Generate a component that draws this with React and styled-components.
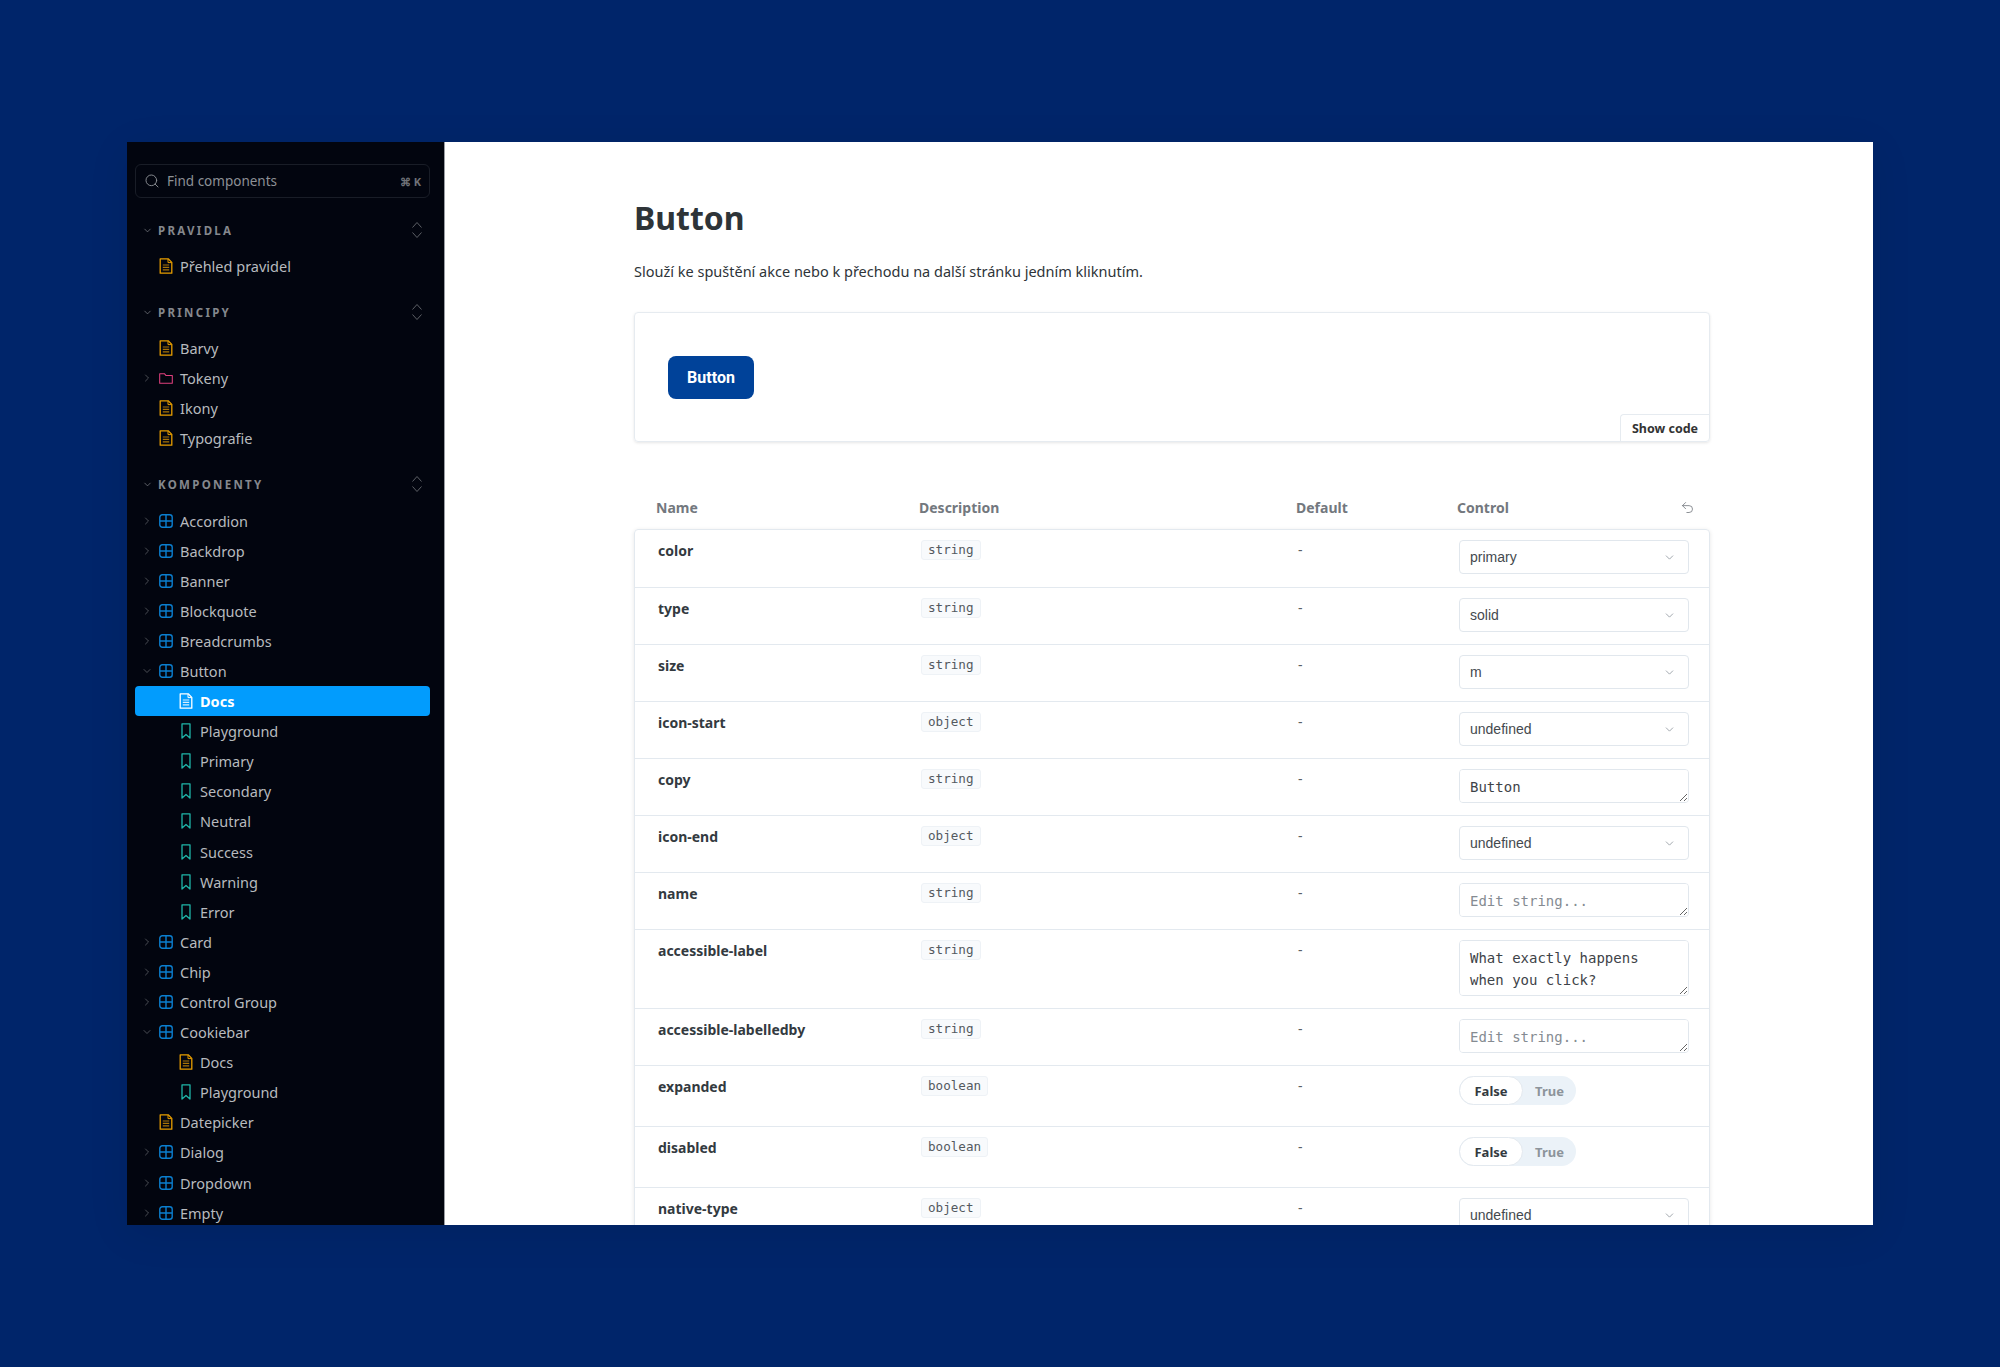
import styled, { createGlobalStyle } from 'styled-components';
import { ChevronDown, ChevronRight, Search, Undo2 } from 'lucide-react';

const GlobalStyle = createGlobalStyle`
    html, body {
        margin: 0;
        padding: 0;
        background: #00256a;
    }
    * {
        box-sizing: border-box;
    }
`;

const UI_FONT = '"Noto Sans", "Open Sans", sans-serif';
const MONO_FONT = '"DejaVu Sans Mono", "Liberation Mono", monospace';

const StPage = styled.div`
    height: 1367px;
    padding: 142px 127px;
    overflow: hidden;
    background: #00256a;
`;

const StWindow = styled.div`
    display: flex;
    width: 1746px;
    height: 1083px;
    overflow: hidden;
    background: #fff;
    font-family: ${UI_FONT};
    box-shadow: 0 8px 40px rgba(0, 0, 0, 0.08);
`;

const StSidebar = styled.aside`
    flex: 0 0 318px;
    padding: 22px 14px 0 8px;
    overflow: hidden;
    background: #02050f;
    border-right: 1px solid #9a9da3;
`;

const StSearch = styled.div`
    display: flex;
    align-items: center;
    height: 34px;
    margin-bottom: 17px;
    padding: 0 8px;
    gap: 7px;
    border: 1px solid #191d27;
    border-radius: 6px;
    color: #8d9096;
    font-size: 13.5px;
`;

const StSearchText = styled.span`
    flex: 1;
`;

const StShortcut = styled.span`
    color: #6f7278;
    font-size: 11px;
    font-weight: 700;
`;

const StSection = styled.section`
    margin-bottom: 16px;
`;

const StSectionHead = styled.div`
    display: flex;
    align-items: center;
    height: 30px;
    margin-bottom: 6px;
    padding: 0 7px 0 7px;
    color: #85888d;
    font-size: 11.5px;
    font-weight: 700;
    letter-spacing: 2.3px;
`;

const StSectionTitle = styled.span`
    flex: 1;
    margin-left: 5px;
`;

const StRow = styled.div`
    display: flex;
    align-items: center;
    height: 30.1px;
    padding-left: ${({ $nested }) => ($nested ? '44px' : '24px')};
    border-radius: 4px;
    background: ${({ $active }) => ($active ? '#029cfd' : 'transparent')};
    color: ${({ $active }) => ($active ? '#fff' : '#b7babe')};
    font-size: 14.5px;
    font-weight: ${({ $active }) => ($active ? 700 : 400)};
`;

const StCaret = styled.span`
    display: flex;
    justify-content: center;
    width: 12px;
    margin-left: -18px;
    margin-right: 6px;
    color: #5d6066;
`;

const StIconSlot = styled.span`
    display: flex;
    justify-content: center;
    width: 14px;
    margin-right: 7px;
`;

const StMain = styled.main`
    flex: 1;
    min-width: 0;
    padding: 56px 163px 0 189px;
    overflow: hidden;
    color: #2e3438;
`;

const StTitle = styled.h1`
    margin: 0 0 23px;
    font-size: 32px;
    font-weight: 700;
    line-height: 40px;
`;

const StLead = styled.p`
    margin: 0 0 31px;
    font-size: 14.5px;
    line-height: 20px;
`;

const StPreview = styled.div`
    position: relative;
    display: flex;
    align-items: center;
    height: 130px;
    padding-left: 33px;
    border: 1px solid #e6ebf0;
    border-radius: 4px;
    box-shadow: 0 1px 3px rgba(0, 0, 0, 0.1);
`;

const StButton = styled.button`
    width: 86px;
    height: 43px;
    border: 0;
    border-radius: 8px;
    background: #004299;
    color: #fff;
    font-family: Roboto, sans-serif;
    font-size: 16px;
    font-weight: 700;
`;

const StShowCode = styled.div`
    position: absolute;
    right: 0;
    bottom: 0;
    display: flex;
    align-items: center;
    justify-content: center;
    width: 89px;
    height: 27px;
    border-top: 1px solid #e6ebf0;
    border-left: 1px solid #e6ebf0;
    border-radius: 4px 0 0 0;
    color: #333;
    font-size: 12.5px;
    font-weight: 700;
`;

const StColumns = styled.div`
    display: grid;
    grid-template-columns: 263px 377px 161px 1fr;
    padding-left: 23px;
`;

const StTableHead = styled(StColumns)`
    align-items: center;
    height: 20px;
    margin: 55px 0 12px;
    padding-left: 22px;
    padding-right: 15px;
    color: #73787e;
    font-size: 14px;
    font-weight: 700;
`;

const StControlHead = styled.div`
    display: flex;
    align-items: center;
    justify-content: space-between;
`;

const StTable = styled.div`
    border: 1px solid #e3e9ef;
    border-radius: 4px;
    box-shadow: 0 1px 4px rgba(0, 0, 0, 0.1);
`;

const StPropRow = styled(StColumns)`
    min-height: ${({ $height }) => $height}px;
    padding-top: 10px;
    border-top: ${({ $first }) => ($first ? '0' : '1px solid #e3e9ef')};
`;

const StPropName = styled.div`
    margin-top: 1px;
    color: #333a3f;
    font-size: 14px;
    font-weight: 700;
    line-height: 20px;
`;

const StChip = styled.div`
    justify-self: start;
    align-self: start;
    height: 20px;
    padding: 0 6px;
    border: 1px solid #eef2f6;
    border-radius: 3px;
    background: #f8fafc;
    color: #53595f;
    font-family: ${MONO_FONT};
    font-size: 12.6px;
    line-height: 17px;
`;

const StDash = styled.div`
    color: #5b6066;
    font-size: 14px;
    line-height: 20px;
`;

const StSelect = styled.div`
    display: flex;
    align-items: center;
    justify-content: space-between;
    width: 230px;
    height: 34px;
    padding: 0 12px 0 10px;
    border: 1px solid #e1e7ed;
    border-radius: 4px;
    color: #44494e;
    font-family: "Liberation Sans", Arial, sans-serif;
    font-size: 14px;
`;

const StArea = styled.textarea`
    display: block;
    width: 230px;
    height: ${({ $height }) => $height}px;
    margin: 0;
    padding: 7px 10px;
    border: 1px solid #e1e7ed;
    border-radius: 4px;
    outline: none;
    resize: vertical;
    color: #3e4348;
    font-family: ${MONO_FONT};
    font-size: 14px;
    line-height: 21.7px;

    &::placeholder {
        color: #858b92;
    }
`;

const StToggle = styled.div`
    display: flex;
    align-items: center;
    width: 117px;
    height: 29px;
    border-radius: 15px;
    background: #ebf2f8;
    font-size: 13px;
    font-weight: 700;
`;

const StToggleOn = styled.span`
    display: flex;
    align-items: center;
    justify-content: center;
    width: 64px;
    height: 29px;
    border: 1px solid #e3e9ef;
    border-radius: 15px;
    background: #fff;
    color: #333a3f;
`;

const StToggleOff = styled.span`
    flex: 1;
    text-align: center;
    color: #8d949b;
`;

const DocIcon = ({ color = '#e69d00', lineColor = '#a87408' }) => (
    <svg width="14" height="16" viewBox="0 0 14 16" fill="none">
        <path d="M1.2 .8h8l3.6 3.6v10.8H1.2z" stroke={color} strokeWidth="1.3" strokeLinejoin="round" />
        <path d="M9 1v3.6h3.6" stroke={color} strokeWidth="1" />
        <path d="M3.8 7h6.4M3.8 9.4h6.4M3.8 11.8h6.4" stroke={lineColor} strokeWidth="1.2" />
    </svg>
);

const ComponentIcon = () => (
    <svg width="14" height="14" viewBox="0 0 14 14" fill="none">
        <rect x=".8" y=".8" width="12.4" height="12.4" rx="2.5" stroke="#0b7fd0" strokeWidth="1.4" />
        <path d="M7 1v12M1 7h12" stroke="#0b7fd0" strokeWidth="1.4" />
    </svg>
);

const FolderIcon = () => (
    <svg width="16" height="13" viewBox="0 0 16 13" fill="none">
        <path d="M.8 1h5.4l1.6 2h7.4v9H.8z" stroke="#e0407e" strokeWidth="1.2" strokeLinejoin="round" />
    </svg>
);

const StoryIcon = () => (
    <svg width="10" height="16" viewBox="0 0 10 16" fill="none">
        <path d="M1 .8h8v14.2L5 11.4 1 15z" stroke="#1fb5a8" strokeWidth="1.3" strokeLinejoin="round" />
    </svg>
);

const ExpandIcon = () => (
    <svg width="12" height="18" viewBox="0 0 12 18" fill="none">
        <path d="M1.5 6.5 6 1.5l4.5 5M1.5 11.5 6 16.5l4.5-5" stroke="#5d6066" strokeWidth="1" />
    </svg>
);

const ICONS = {
    doc: <DocIcon />,
    activeDoc: <DocIcon color="#fff" lineColor="#d7eeff" />,
    comp: <ComponentIcon />,
    folder: <FolderIcon />,
    story: <StoryIcon />,
};

const closedComp = (label) => ({ label, icon: 'comp', caret: 'right' });
const story = (label) => ({ label, icon: 'story', nested: true });

const SECTIONS = [
    { title: 'PRAVIDLA', items: [{ label: 'Přehled pravidel', icon: 'doc' }] },
    {
        title: 'PRINCIPY',
        items: [
            { label: 'Barvy', icon: 'doc' },
            { label: 'Tokeny', icon: 'folder', caret: 'right' },
            { label: 'Ikony', icon: 'doc' },
            { label: 'Typografie', icon: 'doc' },
        ],
    },
    {
        title: 'KOMPONENTY',
        items: [
            closedComp('Accordion'),
            closedComp('Backdrop'),
            closedComp('Banner'),
            closedComp('Blockquote'),
            closedComp('Breadcrumbs'),
            { label: 'Button', icon: 'comp', caret: 'down' },
            { label: 'Docs', icon: 'activeDoc', nested: true, active: true },
            story('Playground'),
            story('Primary'),
            story('Secondary'),
            story('Neutral'),
            story('Success'),
            story('Warning'),
            story('Error'),
            closedComp('Card'),
            closedComp('Chip'),
            closedComp('Control Group'),
            { label: 'Cookiebar', icon: 'comp', caret: 'down' },
            { label: 'Docs', icon: 'doc', nested: true },
            story('Playground'),
            { label: 'Datepicker', icon: 'doc' },
            closedComp('Dialog'),
            closedComp('Dropdown'),
            closedComp('Empty'),
        ],
    },
];

const PROPS = [
    { name: 'color', type: 'string', control: 'select', value: 'primary' },
    { name: 'type', type: 'string', control: 'select', value: 'solid' },
    { name: 'size', type: 'string', control: 'select', value: 'm' },
    { name: 'icon-start', type: 'object', control: 'select', value: 'undefined' },
    { name: 'copy', type: 'string', control: 'text', value: 'Button' },
    { name: 'icon-end', type: 'object', control: 'select', value: 'undefined' },
    { name: 'name', type: 'string', control: 'text' },
    { name: 'accessible-label', type: 'string', control: 'text', value: 'What exactly happens\nwhen you click?', height: 56, rowHeight: 79 },
    { name: 'accessible-labelledby', type: 'string', control: 'text' },
    { name: 'expanded', type: 'boolean', control: 'toggle', rowHeight: 61 },
    { name: 'disabled', type: 'boolean', control: 'toggle', rowHeight: 61 },
    { name: 'native-type', type: 'object', control: 'select', value: 'undefined' },
];

const Control = ({ prop }) => {
    if (prop.control === 'select') {
        return (
            <StSelect>
                {prop.value}
                <ChevronDown size={13} color="#8d949b" strokeWidth={1.5} />
            </StSelect>
        );
    }
    if (prop.control === 'toggle') {
        return (
            <StToggle>
                <StToggleOn>False</StToggleOn>
                <StToggleOff>True</StToggleOff>
            </StToggle>
        );
    }
    return <StArea readOnly $height={prop.height || 34} value={prop.value || ''} placeholder="Edit string..." />;
};

const App = () => {
    return (
        <StPage>
            <GlobalStyle />
            <StWindow>
                <StSidebar>
                    <StSearch>
                        <Search size={16} strokeWidth={1.4} />
                        <StSearchText>Find components</StSearchText>
                        <StShortcut>⌘ K</StShortcut>
                    </StSearch>
                    {SECTIONS.map((section) => (
                        <StSection key={section.title}>
                            <StSectionHead>
                                <ChevronDown size={11} strokeWidth={1.5} />
                                <StSectionTitle>{section.title}</StSectionTitle>
                                <ExpandIcon />
                            </StSectionHead>
                            {section.items.map((item, i) => (
                                <StRow key={i} $nested={item.nested} $active={item.active}>
                                    {item.caret && (
                                        <StCaret>
                                            {item.caret === 'right' ? (
                                                <ChevronRight size={12} strokeWidth={1.6} />
                                            ) : (
                                                <ChevronDown size={12} strokeWidth={1.6} />
                                            )}
                                        </StCaret>
                                    )}
                                    <StIconSlot>{ICONS[item.icon]}</StIconSlot>
                                    {item.label}
                                </StRow>
                            ))}
                        </StSection>
                    ))}
                </StSidebar>
                <StMain>
                    <StTitle>Button</StTitle>
                    <StLead>Slouží ke spuštění akce nebo k přechodu na další stránku jedním kliknutím.</StLead>
                    <StPreview>
                        <StButton>Button</StButton>
                        <StShowCode>Show code</StShowCode>
                    </StPreview>
                    <StTableHead>
                        <div>Name</div>
                        <div>Description</div>
                        <div>Default</div>
                        <StControlHead>
                            Control
                            <Undo2 size={15} strokeWidth={1.3} color="#73787e" />
                        </StControlHead>
                    </StTableHead>
                    <StTable>
                        {PROPS.map((prop, i) => (
                            <StPropRow key={prop.name} $first={i === 0} $height={prop.rowHeight || 57}>
                                <StPropName>{prop.name}</StPropName>
                                <StChip>{prop.type}</StChip>
                                <StDash>-</StDash>
                                <Control prop={prop} />
                            </StPropRow>
                        ))}
                    </StTable>
                </StMain>
            </StWindow>
        </StPage>
    );
};

export default App;
